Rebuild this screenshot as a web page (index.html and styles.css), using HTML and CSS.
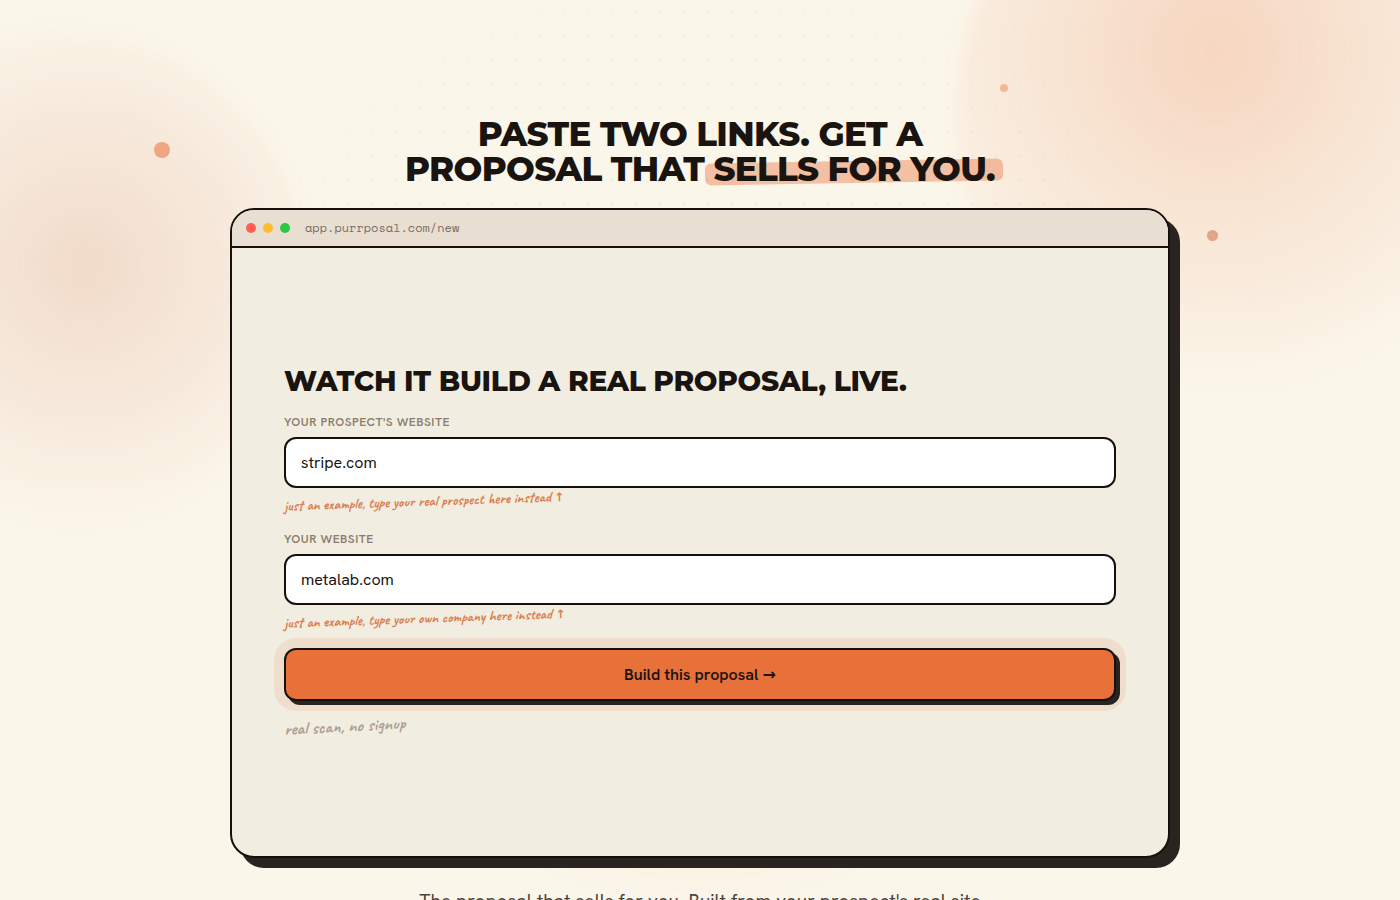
FILE: index.html
```html
<!DOCTYPE html>
<html lang="en">
<head>
  <meta charset="UTF-8">
  <meta name="viewport" content="width=device-width, initial-scale=1.0">
  <title>Purrposal</title>
  <link rel="stylesheet" href="styles.css">
</head>
<body>
  <main class="hero">
    <div class="backdrop" aria-hidden="true">
      <div class="blob blob-right"></div>
      <div class="blob blob-left"></div>
      <div class="blob blob-bottom"></div>
      <div class="grid-dots"></div>
      <span class="speck speck-a"></span>
      <span class="speck speck-b"></span>
      <span class="speck speck-c"></span>
    </div>

    <h1>Paste two links. Get a<br>proposal that <span class="highlight">sells for you.</span></h1>

    <section class="browser">
      <div class="browser-bar">
        <span class="light red"></span>
        <span class="light yellow"></span>
        <span class="light green"></span>
        <span class="url">app.purrposal.com/new</span>
      </div>
      <form class="builder">
        <h2>Watch it build a real proposal, live.</h2>
        <div class="field">
          <label for="prospect">Your prospect's website</label>
          <input type="text" id="prospect" value="stripe.com">
          <p class="hint">just an example, type your real prospect here instead <span class="arrow">↑</span></p>
        </div>
        <div class="field">
          <label for="company">Your website</label>
          <input type="text" id="company" value="metalab.com">
          <p class="hint">just an example, type your own company here instead <span class="arrow">↑</span></p>
        </div>
        <button type="button">Build this proposal <span class="arrow">→</span></button>
        <p class="note">real scan, no signup</p>
      </form>
    </section>

    <p class="lead">The proposal that sells for you. Built from your prospect's real site</p>
  </main>
</body>
</html>
```
FILE: styles.css
```css
* {
  box-sizing: border-box;
}
body {
  margin: 0;
  background-color: #fbf6ea;
  color: #1a1410;
  font-family: "Hanken Grotesk", Inter, sans-serif;
}
h1, h2, p {
  margin: 0;
}
.hero {
  position: relative;
  display: flex;
  flex-direction: column;
  align-items: center;
  padding: 117px 24px 40px;
  overflow: hidden;
}

/* background decoration */
.backdrop {
  position: absolute;
  inset: 0;
  z-index: -1;
}
.blob {
  position: absolute;
  border-radius: 50%;
  filter: blur(8px);
}
.blob-right {
  top: -208px;
  right: -205px;
  width: 650px;
  height: 650px;
  background: radial-gradient(circle at 40% 40%, rgba(232, 113, 58, 0.24), rgba(232, 113, 58, 0) 62%);
}
.blob-left {
  top: 30px;
  left: -190px;
  width: 500px;
  height: 500px;
  background: radial-gradient(circle at 55% 47%, rgba(201, 98, 58, 0.18), rgba(201, 98, 58, 0) 70%);
}
.blob-bottom {
  top: 480px;
  left: 50%;
  width: 600px;
  height: 420px;
  margin-left: -300px;
  background: radial-gradient(closest-side, rgba(232, 113, 58, 0.2), rgba(232, 113, 58, 0));
}
.grid-dots {
  position: absolute;
  inset: 0;
  background-image: radial-gradient(rgba(26, 20, 16, 0.05) 1px, transparent 2px);
  background-size: 24px 24px;
  mask-image: radial-gradient(ellipse 520px 420px at 50% 340px, #000 40%, transparent);
}
.speck {
  position: absolute;
  border-radius: 50%;
  background-color: #e8713a;
}
.speck-a {
  top: 142px;
  left: 11%;
  width: 16px;
  height: 16px;
  opacity: 0.55;
}
.speck-b {
  top: 84px;
  right: 28%;
  width: 8px;
  height: 8px;
  opacity: 0.4;
}
.speck-c {
  top: 230px;
  right: 13%;
  width: 11px;
  height: 11px;
  background-color: #c9623a;
  opacity: 0.5;
}

h1 {
  font-family: Montserrat, Inter, sans-serif;
  font-size: 34px;
  font-weight: 800;
  line-height: 35px;
  letter-spacing: -0.02em;
  text-align: center;
  text-transform: uppercase;
}
.highlight {
  position: relative;
  display: inline-block;
}
.highlight::before {
  content: "";
  position: absolute;
  z-index: -1;
  left: -8px;
  right: -8px;
  top: 9px;
  height: 22px;
  border-radius: 6px;
  background-color: rgba(232, 113, 58, 0.4);
  transform: rotate(-1deg);
}

/* browser window */
.browser {
  display: flex;
  flex-direction: column;
  width: 100%;
  max-width: 940px;
  min-height: 650px;
  margin-top: 21px;
  border: 2px solid #16110d;
  border-radius: 24px;
  background-color: #f2ede1;
  box-shadow: 10px 10px 0 #2a2420;
  overflow: hidden;
}
.browser-bar {
  display: flex;
  align-items: center;
  gap: 7px;
  height: 38px;
  padding: 0 14px;
  border-bottom: 2px solid #16110d;
  background-color: #e8dfd2;
}
.light {
  width: 10px;
  height: 10px;
  border-radius: 50%;
}
.red {
  background-color: #ff5f57;
}
.yellow {
  background-color: #febc2e;
}
.green {
  background-color: #28c840;
}
.url {
  margin-left: 8px;
  font-family: "Space Mono", "Liberation Mono", monospace;
  font-size: 12px;
  line-height: 16px;
  color: #7a6f64;
}

.builder {
  flex: 1;
  display: flex;
  flex-direction: column;
  justify-content: center;
  padding: 0 52px;
}
.builder h2 {
  margin-bottom: 17px;
  font-family: Montserrat, Inter, sans-serif;
  font-size: 28px;
  font-weight: 800;
  line-height: 31px;
  letter-spacing: -0.01em;
  text-transform: uppercase;
}
.field {
  display: flex;
  flex-direction: column;
  height: 117px;
}
.field label {
  margin-bottom: 7px;
  font-size: 12px;
  font-weight: 600;
  line-height: 16px;
  letter-spacing: 0.04em;
  text-transform: uppercase;
  color: #8a7d6f;
}
.field input {
  height: 51px;
  padding: 0 15px;
  border: 2px solid #16110d;
  border-radius: 12px;
  background-color: #fff;
  color: #1a1410;
  font-family: inherit;
  font-size: 16px;
}
.hint,
.note {
  align-self: flex-start;
  font-family: Caveat, Lato, cursive;
  font-weight: 600;
  transform: rotate(-2deg);
}
.hint {
  margin-top: 5px;
  font-size: 15px;
  line-height: 18px;
  color: #d9804f;
}
.arrow {
  font-family: "DejaVu Sans", sans-serif;
}
.hint .arrow {
  font-size: 12px;
}
.builder button {
  height: 53px;
  border: 2px solid #16110d;
  border-radius: 12px;
  background-color: #e8713a;
  box-shadow: 4px 4px 0 #2a2420, 0 0 0 10px rgba(232, 113, 58, 0.12);
  color: #1a1410;
  font-family: inherit;
  font-size: 16px;
  font-weight: 600;
}
.note {
  margin-top: 13px;
  font-size: 18px;
  line-height: 24px;
  color: #ada293;
  transform: rotate(-3deg);
}

.lead {
  margin-top: 30px;
  font-size: 19px;
  line-height: 28px;
  color: #4f453d;
}
```
